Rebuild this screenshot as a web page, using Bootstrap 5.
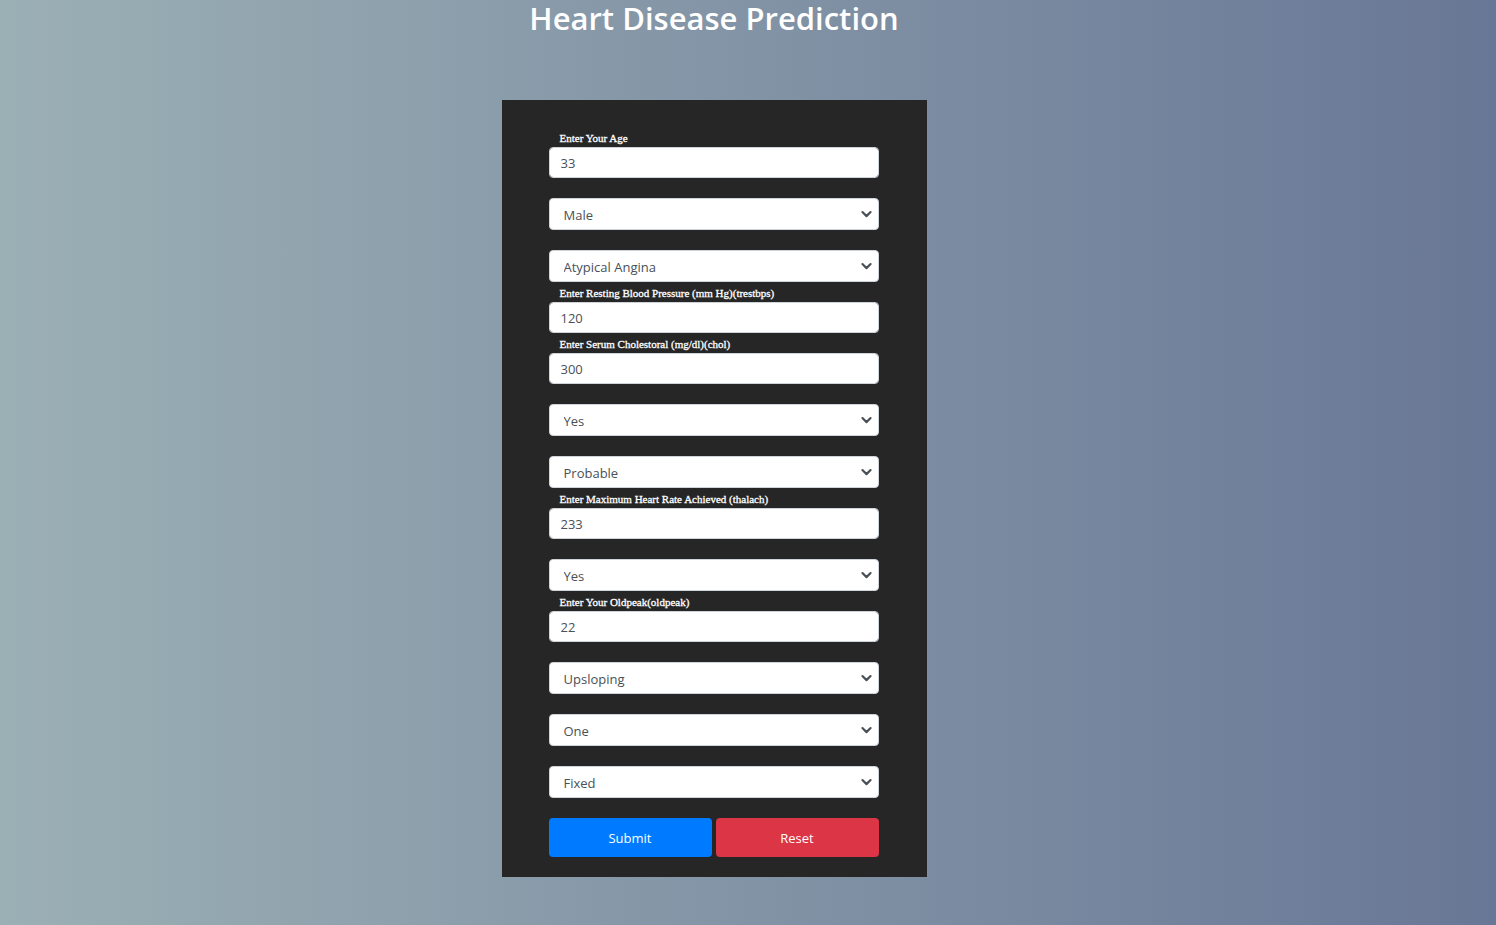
<!DOCTYPE html>
<html lang="en">
<head>
<meta charset="utf-8">
<meta name="viewport" content="width=device-width, initial-scale=1">
<title>Heart Disease Prediction</title>
<link href="https://cdn.jsdelivr.net/npm/bootstrap@5.3.0/dist/css/bootstrap.min.css" rel="stylesheet">
<style>
body{font-family:"Open Sans","Noto Sans",sans-serif;background:linear-gradient(to right,#9bb0b5,#697796)}
.page-title{font-size:31px;line-height:36px;margin-bottom:64px}
.page-main{padding-right:68px}
.panel{width:100%;max-width:425px;background:#262626;padding:27px 48px 20px 47px}
.field-label{height:20px;padding:2px 0 0 11px;font:11px/18px "Liberation Serif",serif;-webkit-text-stroke:.3px #fff;color:#fff;white-space:nowrap;display:block}
.field-choice{padding-top:20px}
.panel .form-control,.panel .form-select{font-size:13px;color:#495057;border:1px solid #ced4da;border-radius:4px;background-color:#fff}
.panel .form-control{height:31px;padding:1px 11px 0}
.panel .form-select{height:32px;padding:3px 24px 0 14px;background-position:right 5px center;background-size:13px 13px;background-image:url("data:image/svg+xml,%3Csvg xmlns='http://www.w3.org/2000/svg' viewBox='0 0 16 16'%3E%3Cpath fill='none' stroke='%23495057' stroke-linecap='round' stroke-linejoin='round' stroke-width='2.7' d='m3 5 5 5 5-5'/%3E%3C/svg%3E")}
.actions{padding-top:20px}
.actions .btn{height:39px;padding:8px 12px 6px;font-size:13px;border-radius:4px;border:0;color:#fff}
.btn-send,.btn-send:hover{background:#007bff}
.btn-clear,.btn-clear:hover{background:#dc3545}
</style>
</head>
<body class="min-vh-100">
<main class="page-main d-flex flex-column align-items-center pb-5">
<h1 class="page-title fw-semibold text-center text-white">Heart Disease Prediction</h1>
<form class="panel">
  <div><label class="field-label" for="age">Enter Your Age</label><input class="form-control" id="age" name="age" value="33"></div>
  <div class="field-choice"><select class="form-select" name="sex" aria-label="Sex"><option>Male</option><option>Female</option></select></div>
  <div class="field-choice"><select class="form-select" name="cp" aria-label="Chest pain type"><option>Atypical Angina</option><option>Typical Angina</option></select></div>
  <div><label class="field-label" for="trestbps">Enter Resting Blood Pressure (mm Hg)(trestbps)</label><input class="form-control" id="trestbps" name="trestbps" value="120"></div>
  <div><label class="field-label" for="chol">Enter Serum Cholestoral (mg/dl)(chol)</label><input class="form-control" id="chol" name="chol" value="300"></div>
  <div class="field-choice"><select class="form-select" name="fbs" aria-label="Fasting blood sugar"><option>Yes</option><option>No</option></select></div>
  <div class="field-choice"><select class="form-select" name="restecg" aria-label="Resting ECG"><option>Probable</option><option>Normal</option></select></div>
  <div><label class="field-label" for="thalach">Enter Maximum Heart Rate Achieved (thalach)</label><input class="form-control" id="thalach" name="thalach" value="233"></div>
  <div class="field-choice"><select class="form-select" name="exang" aria-label="Exercise induced angina"><option>Yes</option><option>No</option></select></div>
  <div><label class="field-label" for="oldpeak">Enter Your Oldpeak(oldpeak)</label><input class="form-control" id="oldpeak" name="oldpeak" value="22"></div>
  <div class="field-choice"><select class="form-select" name="slope" aria-label="Slope"><option>Upsloping</option><option>Flat</option></select></div>
  <div class="field-choice"><select class="form-select" name="ca" aria-label="Major vessels"><option>One</option><option>Two</option></select></div>
  <div class="field-choice"><select class="form-select" name="thal" aria-label="Thal"><option>Fixed</option><option>Normal</option></select></div>
  <div class="actions d-flex gap-1">
    <button type="submit" class="btn btn-send flex-fill w-50">Submit</button>
    <button type="reset" class="btn btn-clear flex-fill w-50">Reset</button>
  </div>
</form>
</main>
<script src="https://cdn.jsdelivr.net/npm/bootstrap@5.3.0/dist/js/bootstrap.bundle.min.js"></script>
</body>
</html>
